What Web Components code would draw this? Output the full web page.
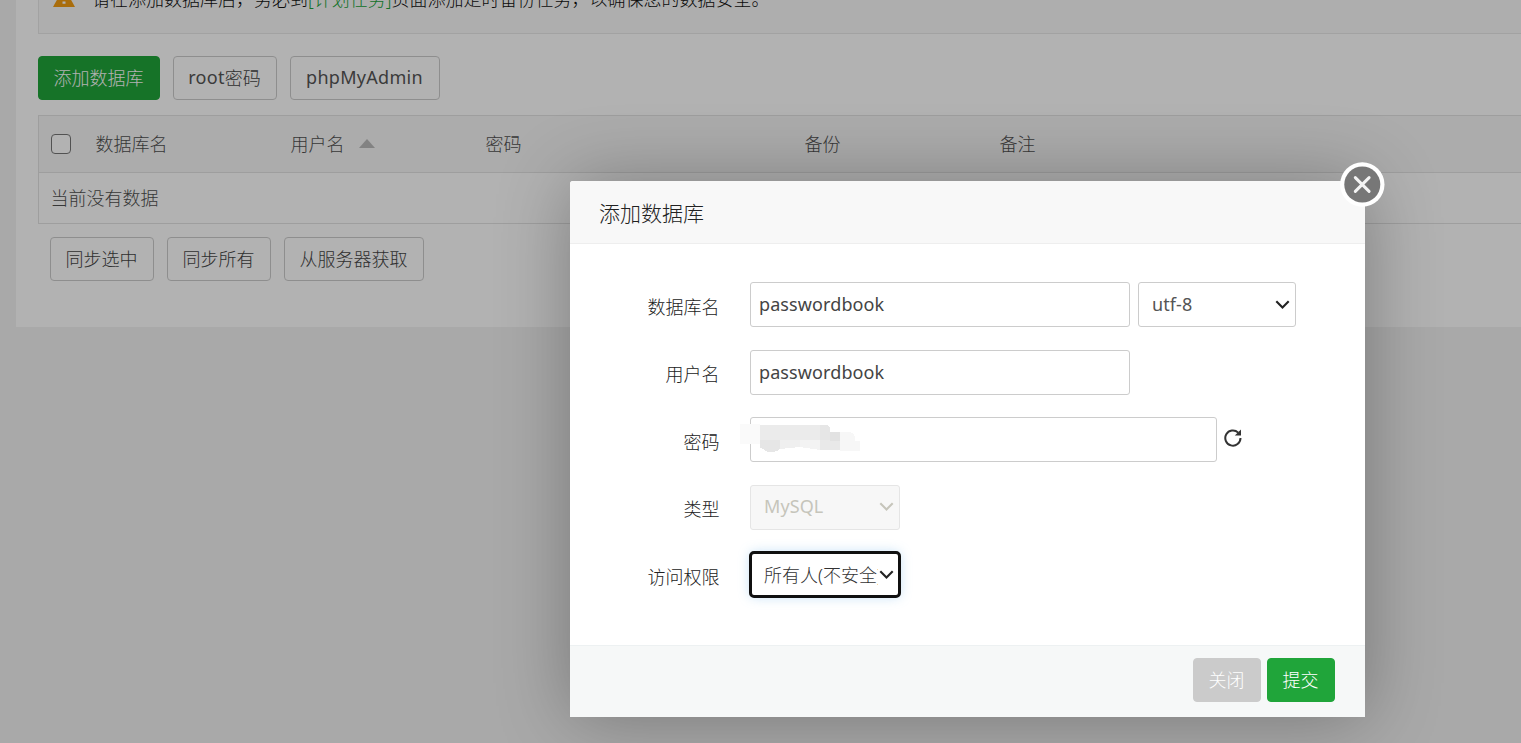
<!DOCTYPE html>
<html lang="zh-CN">
<head>
<meta charset="utf-8">
<title>数据库</title>
<style>
  html, body {
    margin: 0;
    height: 743px;
    overflow: hidden;
  }

  body {
    position: relative;
    background: #f2f2f2;
    font-family: "Noto Sans", "Noto Sans CJK SC", sans-serif;
    font-size: 18px;
    font-weight: 300;
    color: #333;
  }
</style>
</head>
<body>
<db-page></db-page>
<bt-mask></bt-mask>
<bt-dialog>
  <span slot="title">添加数据库</span>
  <bt-row label="数据库名">
    <bt-input style="width: 380px">passwordbook</bt-input>
    <bt-select latin style="width: 158px">utf-8</bt-select>
  </bt-row>
  <bt-row label="用户名">
    <bt-input style="width: 380px">passwordbook</bt-input>
  </bt-row>
  <bt-row label="密码">
    <bt-input style="width: 467px" masked></bt-input>
    <bt-refresh></bt-refresh>
  </bt-row>
  <bt-row label="类型">
    <bt-select latin disabled style="width: 150px">MySQL</bt-select>
  </bt-row>
  <bt-row label="访问权限">
    <bt-select focused style="width: 150px">所有人(不安全)</bt-select>
  </bt-row>
  <bt-button slot="footer" kind="gray">关闭</bt-button>
  <bt-button slot="footer" kind="green">提交</bt-button>
</bt-dialog>

<script>
class BtElement extends HTMLElement {
  constructor() {
    super();
    this.attachShadow({ mode: "open" });
    this.shadowRoot.innerHTML = this.render();
  }
}

class BtButton extends BtElement {
  render() {
    return `
      <style>
        :host {
          display: flex;
          align-items: center;
          justify-content: center;
          box-sizing: border-box;
          height: 44px;
          padding: 0 15.5px 2px 14.5px;
          border: 1px solid #ccc;
          border-radius: 4px;
          color: #444;
          white-space: nowrap;
        }

        :host([kind="green"]) {
          background: #20a53a;
          border-color: #20a53a;
          color: #fff;
        }

        :host([kind="gray"]) {
          background: #cbcbcb;
          border-color: #cbcbcb;
          color: #fff;
        }
      </style>
      <slot></slot>
    `;
  }
}

class BtInput extends BtElement {
  render() {
    return `
      <style>
        :host {
          display: flex;
          align-items: center;
          position: relative;
          box-sizing: border-box;
          height: 45px;
          padding: 0 8px 1px;
          border: 1px solid #ccc;
          border-radius: 3px;
          background: #fff;
          color: #444;
          font-weight: 400;
          letter-spacing: .1px;
        }

        svg {
          display: none;
          position: absolute;
          left: -11px;
          top: 5px;
        }

        :host([masked]) svg {
          display: block;
        }
      </style>
      <slot></slot>
      <svg width="122" height="32" viewBox="0 0 122 32" shape-rendering="crispEdges">
        <path fill="#fafafa" d="M0 1h20v20H0z"/>
        <path fill="#ebebeb" d="M20 2h60v16H20z"/>
        <path fill="#e6e6e6" d="M80 2h7l3 3v13H80z"/>
        <path fill="#e6e6e6" d="M20 17h20v9q-3 3-9 3-5 0-8-3l-3-1z"/>
        <path fill="#efefef" d="M40 17h20v7l-20 2z"/>
        <path fill="#f3f3f3" d="M60 17h20v10l-20-3z"/>
        <path fill="#e9e9e9" d="M80 17h20v10H80z"/>
        <path fill="#e2e2e2" d="M90 9h10v9H90z"/>
        <path fill="#f7f7f7" d="M100 9h10q4 1 5 5v4h5v10h-20z"/>
      </svg>
    `;
  }
}

class BtSelect extends BtElement {
  render() {
    return `
      <style>
        :host {
          display: flex;
          align-items: center;
          box-sizing: border-box;
          height: 45px;
          padding: 0 5px 0 13px;
          border: 1px solid #ccc;
          border-radius: 3px;
          background: #fff;
          color: #333;
        }

        .value {
          flex: 1;
          padding-bottom: 2px;
          overflow: hidden;
          white-space: nowrap;
        }

        svg {
          flex: none;
          margin-left: 1px;
          color: #222;
        }

        :host([latin]) {
          color: #555;
          font-weight: 400;
          letter-spacing: .1px;
        }

        :host([disabled]) {
          background: #f7f7f7;
          border-color: #e5e5e5;
          color: #c6c5bb;
        }

        :host([disabled]) svg {
          color: #c6c5bb;
        }

        :host([focused]) {
          border-color: #101010;
          outline: 3px solid #101010;
          outline-offset: -2.5px;
          border-radius: 4px;
          box-shadow: 0 0 12px rgba(102, 175, 233, .4);
        }
      </style>
      <div class="value"><slot></slot></div>
      <svg width="15" height="12" viewBox="0 0 15 12" fill="none" stroke="currentColor" stroke-width="2.1">
        <path d="M1.3 2.2 7.5 8.4l6.2-6.2"/>
      </svg>
    `;
  }
}

class BtRefresh extends BtElement {
  render() {
    return `
      <style>
        :host {
          display: block;
          width: 18px;
          height: 18px;
          margin: 0 0 3px -1px;
          color: #333;
        }

        svg {
          display: block;
        }
      </style>
      <svg width="18" height="18" viewBox="0 0 18 18">
        <path d="M14.2 3.6A7.6 7.6 0 1 0 16.5 9" fill="none" stroke="currentColor" stroke-width="2"/>
        <path d="M17 .4v6.2h-6.2z" fill="currentColor"/>
      </svg>
    `;
  }
}

class BtRow extends BtElement {
  render() {
    return `
      <style>
        :host {
          display: flex;
          align-items: center;
          height: 45px;
          gap: 8px;
        }

        .label {
          width: 149.5px;
          margin-right: 22.5px;
          padding-top: 2px;
          text-align: right;
          color: #222;
        }
      </style>
      <div class="label">${this.getAttribute("label")}</div>
      <slot></slot>
    `;
  }
}

class BtDialog extends BtElement {
  render() {
    return `
      <style>
        :host {
          display: flex;
          flex-direction: column;
          position: absolute;
          left: 570px;
          top: 181px;
          width: 795px;
          height: 536px;
          border-radius: 3px 3px 0 0;
          background: #fff;
          box-shadow: 1px 1px 75px rgba(0, 0, 0, .3);
        }

        header {
          display: flex;
          align-items: center;
          box-sizing: border-box;
          height: 63px;
          padding: 0 29px 1px;
          border-bottom: 1px solid #eee;
          border-radius: 3px 3px 0 0;
          background: #f8f8f8;
          color: #222;
          font-size: 21px;
        }

        main {
          flex: 1;
          display: flex;
          flex-direction: column;
          gap: 22.5px;
          padding-top: 38px;
        }

        footer {
          display: flex;
          justify-content: flex-end;
          gap: 6px;
          box-sizing: border-box;
          height: 72px;
          padding: 12px 30px 0;
          border-top: 1px solid #edf1f2;
          background: #f6f8f8;
        }

        .close {
          position: absolute;
          right: -20px;
          top: -19px;
        }
      </style>
      <header><slot name="title"></slot></header>
      <main><slot></slot></main>
      <footer><slot name="footer"></slot></footer>
      <svg class="close" width="45" height="45" viewBox="0 0 45 45">
        <circle cx="22.3" cy="22.5" r="22.2" fill="#fff"/>
        <circle cx="22.3" cy="22.5" r="18" fill="#777"/>
        <path d="m15.3 15.6 13.8 13.8m0-13.8L15.3 29.4" stroke="#f4f4f4" stroke-width="3" stroke-linecap="round"/>
      </svg>
    `;
  }
}

class BtMask extends BtElement {
  render() {
    return `
      <style>
        :host {
          display: block;
          position: absolute;
          inset: 0;
          background: rgba(0, 0, 0, .3);
        }
      </style>
    `;
  }
}

class DbTable extends BtElement {
  render() {
    return `
      <style>
        :host {
          display: block;
          border: 1px solid #e2e2e2;
          border-right: 0;
          color: #505050;
        }

        .head, .empty {
          display: flex;
          align-items: center;
          padding-left: 12px;
        }

        .head {
          height: 56px;
          border-bottom: 1px solid #e2e2e2;
          background: #f6f6f6;
        }

        .empty {
          box-sizing: border-box;
          height: 50px;
          padding: 0 0 2px 11.5px;
        }

        .check {
          width: 44.5px;
        }

        .check i {
          display: block;
          box-sizing: border-box;
          width: 20px;
          height: 20px;
          border: 1.5px solid #767676;
          border-radius: 4px;
          background: #fff;
        }

        .col {
          width: 195px;
          padding-bottom: 2px;
        }

        .wide {
          width: 319px;
        }

        .sort {
          display: inline-block;
          margin-left: 10px;
          border: 8.5px solid transparent;
          border-top: 0;
          border-bottom: 9px solid #bbb;
          vertical-align: 3px;
        }
      </style>
      <div class="head">
        <div class="check"><i></i></div>
        <div class="col">数据库名</div>
        <div class="col">用户名 <span class="sort"></span></div>
        <div class="col wide">密码</div>
        <div class="col">备份</div>
        <div class="col">备注</div>
      </div>
      <div class="empty">当前没有数据</div>
    `;
  }
}

class DbPage extends BtElement {
  render() {
    return `
      <style>
        :host {
          display: block;
          height: 327px;
          margin-left: 16px;
          padding-left: 22px;
          box-sizing: border-box;
          background: #fff;
          overflow: hidden;
        }

        .tip {
          display: flex;
          align-items: flex-start;
          box-sizing: border-box;
          height: 64px;
          margin-top: -30px;
          padding: 15px 0 0 14px;
          border: 1px solid #e8e8e8;
          border-right: 0;
          background: #fafafa;
          color: #111;
          line-height: 26px;
        }

        .tip svg {
          margin: 1px 17px 0 0;
        }

        .tip a {
          color: #20a53a;
        }

        .bar {
          display: flex;
          gap: 13px;
          margin: 22px 0 15px;
        }

        .latin {
          font-weight: 400;
          color: #555;
          letter-spacing: .3px;
        }

        .bottom {
          margin: 13px 0 0 12px;
        }
      </style>
      <div class="tip">
        <svg width="22" height="20" viewBox="0 0 22 20">
          <path d="M11 0 22 20H0z" fill="#f39c12"/>
          <path d="M9.3 6h3.4l-.6 7H9.9zM9.5 14.4h3v2.4h-3z" fill="#fff"/>
        </svg>
        <span>请在添加数据库后，务必到<a>[计划任务]</a>页面添加定时备份任务，以确保您的数据安全。</span>
      </div>
      <div class="bar">
        <bt-button kind="green">添加数据库</bt-button>
        <bt-button style="width: 104px"><span class="latin">root</span>密码</bt-button>
        <bt-button style="width: 150px"><span class="latin">phpMyAdmin</span></bt-button>
      </div>
      <db-table></db-table>
      <div class="bar bottom">
        <bt-button>同步选中</bt-button>
        <bt-button>同步所有</bt-button>
        <bt-button>从服务器获取</bt-button>
      </div>
    `;
  }
}

customElements.define("bt-button", BtButton);
customElements.define("bt-input", BtInput);
customElements.define("bt-select", BtSelect);
customElements.define("bt-refresh", BtRefresh);
customElements.define("bt-row", BtRow);
customElements.define("bt-dialog", BtDialog);
customElements.define("bt-mask", BtMask);
customElements.define("db-table", DbTable);
customElements.define("db-page", DbPage);
</script>
</body>
</html>
